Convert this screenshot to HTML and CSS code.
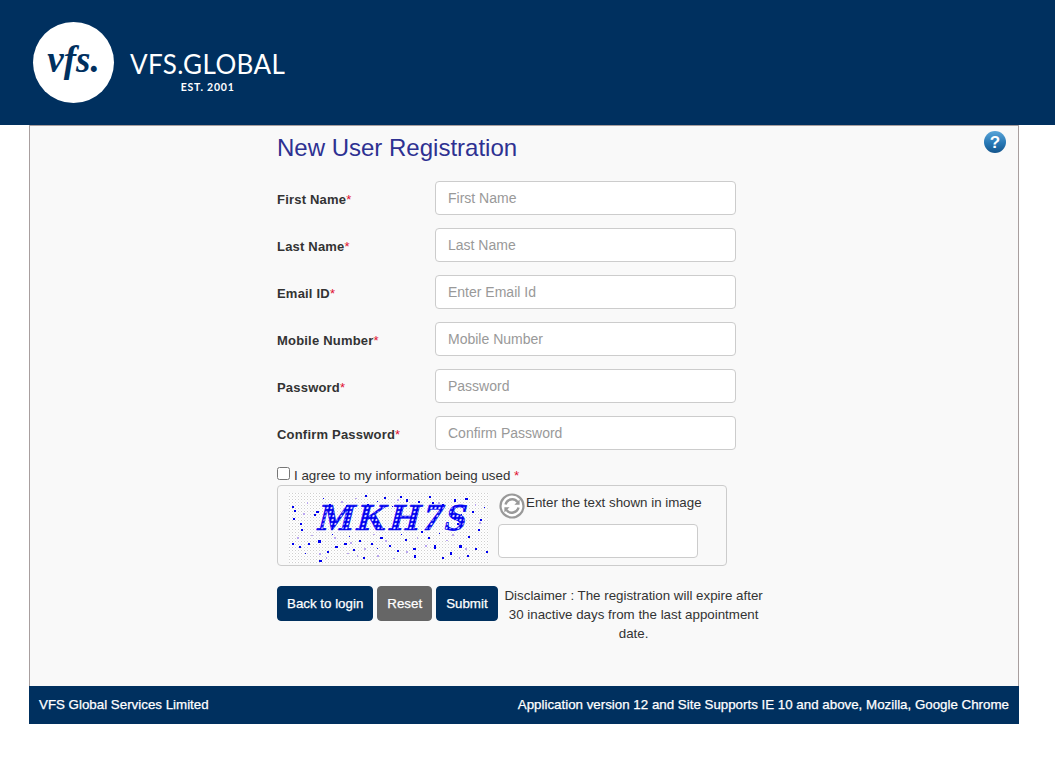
FILE: index.html
```html
<!DOCTYPE html>
<html lang="en">
<head>
    <meta charset="UTF-8" />
    <title>New User Registration</title>
    <link rel="stylesheet" href="styles.css">
</head>
<body>
<!-- header -->
<header class="site-header">
    <div class="logo">
        <div class="logo-circle">vfs.</div>
        <div class="logo-text">
            <div class="logo-name">VFS.GLOBAL</div>
            <div class="logo-est">EST. 2001</div>
        </div>
    </div>
</header>

<div class="wrapper">
    <main class="panel">
        <a class="help-icon" href="#" aria-label="Help">
            <svg width="24" height="24" viewBox="0 0 24 24">
                <defs>
                    <linearGradient id="helpFill" x1="0" y1="0" x2="0" y2="1">
                        <stop offset="0" stop-color="#5aa5d8" />
                        <stop offset="0.55" stop-color="#2778b5" />
                        <stop offset="1" stop-color="#14558c" />
                    </linearGradient>
                </defs>
                <circle cx="12" cy="12" r="11" fill="url(#helpFill)" />
                <text x="12" y="18" text-anchor="middle" class="help-mark">?</text>
            </svg>
        </a>

        <h1 class="page-title">New User Registration</h1>

        <form class="reg-form">
            <div class="form-row">
                <label class="form-label">First Name<span class="req">*</span></label>
                <input class="form-input" type="text" placeholder="First Name" />
            </div>
            <div class="form-row">
                <label class="form-label">Last Name<span class="req">*</span></label>
                <input class="form-input" type="text" placeholder="Last Name" />
            </div>
            <div class="form-row">
                <label class="form-label">Email ID<span class="req">*</span></label>
                <input class="form-input" type="text" placeholder="Enter Email Id" />
            </div>
            <div class="form-row">
                <label class="form-label">Mobile Number<span class="req">*</span></label>
                <input class="form-input" type="text" placeholder="Mobile Number" />
            </div>
            <div class="form-row">
                <label class="form-label">Password<span class="req">*</span></label>
                <input class="form-input" type="password" placeholder="Password" />
            </div>
            <div class="form-row">
                <label class="form-label">Confirm Password<span class="req">*</span></label>
                <input class="form-input" type="password" placeholder="Confirm Password" />
            </div>

            <label class="agree">
                <input class="agree-check" type="checkbox" />
                <span>I agree to my information being used <span class="req">*</span></span>
            </label>

            <!-- captcha -->
            <div class="captcha-box">
                <svg class="captcha-img" width="200" height="70" viewBox="0 0 200 70">
                    <defs>
                        <pattern id="stipple" width="3" height="3" patternUnits="userSpaceOnUse">
                            <rect width="3" height="3" fill="#fff" />
                            <rect width="1" height="1" fill="#cfcfcf" />
                            <rect x="1.5" y="1.5" width="1" height="1" fill="#e4e4e4" />
                        </pattern>
                        <pattern id="letterFill" width="4" height="4" patternUnits="userSpaceOnUse">
                            <rect width="4" height="4" fill="#0000f0" />
                            <rect x="1" y="1" width="2" height="2" fill="#fff" />
                        </pattern>
                    </defs>
                    <rect width="200" height="70" fill="url(#stipple)" />
                    <path fill="#b9a6f0" d="M14 20h2v2h-2zM30 60h2v2h-2zM52 8h2v2h-2zM61 49h2v2h-2zM75 55h2v2h-2zM96 47h2v2h-2zM108 6h2v2h-2zM117 58h2v2h-2zM136 52h2v2h-2zM149 9h2v2h-2zM163 41h2v2h-2zM176 55h2v2h-2zM190 29h2v2h-2zM8 44h2v2h-2zM45 44h2v2h-2zM88 62h2v2h-2zM22 42h2v1h-2zM37 64h1v2h-1zM58 60h2v1h-2zM68 62h1v2h-1zM84 41h2v1h-2zM104 65h2v1h-2zM128 44h1v2h-1zM157 47h2v1h-2zM170 64h1v2h-1zM18 9h1v2h-1zM66 5h2v1h-2zM122 12h2v1h-2zM186 11h1v2h-1z" />
                    <path fill="#0000f0" d="M3 13h2v2h-2zM5 17h2v2h-2zM4 25h2v2h-2zM11 30h2v2h-2zM12 36h2v2h-2zM27 18h3v2h-3zM25 21h2v2h-2zM40 11h2v2h-2zM57 12h2v2h-2zM78 11h2v2h-2zM76 2h2v2h-2zM95 4h2v2h-2zM111 3h2v2h-2zM117 6h2v3h-2zM129 8h2v2h-2zM140 3h2v2h-2zM143 9h2v2h-2zM153 11h2v2h-2zM165 6h2v3h-2zM176 5h3v2h-3zM183 18h2v2h-2zM191 26h2v2h-2zM189 36h2v2h-2zM179 43h2v2h-2zM186 55h2v2h-2zM170 52h3v3h-3zM197 58h2v2h-2zM161 59h2v3h-2zM145 52h2v4h-2zM139 44h2v2h-2zM132 38h2v2h-2zM124 55h3v2h-3zM116 46h2v2h-2zM108 57h2v2h-2zM100 52h2v2h-2zM91 44h3v2h-3zM82 50h2v2h-2zM70 47h2v2h-2zM64 56h2v2h-2zM55 50h3v2h-3zM46 53h3v2h-3zM38 58h2v2h-2zM29 47h3v3h-3zM19 50h2v2h-2zM10 53h2v2h-2zM3 50h2v2h-2zM30 67h3v2h-3zM74 64h2v2h-2zM125 62h2v3h-2zM153 64h2v2h-2zM178 62h2v2h-2zM168 30h2v2h-2zM16 60h1v1h-1zM43 41h1v1h-1zM60 43h1v1h-1zM88 55h1v1h-1zM112 41h1v1h-1zM150 40h1v1h-1zM158 33h1v1h-1zM172 21h1v1h-1zM195 14h1v1h-1zM34 5h1v1h-1zM88 8h1v1h-1zM103 13h1v1h-1z" />
                    <text transform="translate(27 37) skewX(-14)" class="captcha-text" fill="url(#letterFill)" stroke="#0000f0" stroke-width="0.7" textLength="148" lengthAdjust="spacing">MKH7S</text>
                </svg>
                <div class="captcha-side">
                    <div class="captcha-hint">
                        <svg class="refresh-icon" width="26" height="26" viewBox="0 0 26 26">
                            <circle cx="13" cy="13" r="11.5" fill="#fff" stroke="#999" stroke-width="2.2" />
                            <path d="M6.5 11.5a6.8 6.8 0 0 1 12-2.5" fill="none" stroke="#999" stroke-width="2.4" />
                            <path d="M20.6 6.6v5.2h-5.2z" fill="#999" />
                            <path d="M19.5 14.5a6.8 6.8 0 0 1-12 2.5" fill="none" stroke="#999" stroke-width="2.4" />
                            <path d="M5.4 19.4v-5.2h5.2z" fill="#999" />
                        </svg>
                        <span class="hint-text">Enter the text shown in image</span>
                    </div>
                    <input class="captcha-input" type="text" />
                </div>
            </div>

            <div class="actions">
                <button class="btn" type="button">Back to login</button>
                <button class="btn btn-grey" type="reset">Reset</button>
                <button class="btn" type="button">Submit</button>
                <p class="disclaimer">Disclaimer : The registration will expire after 30 inactive days from the last appointment date.</p>
            </div>
        </form>
    </main>

    <footer class="site-footer">
        <span>VFS Global Services Limited</span>
        <span>Application version 12 and Site Supports IE 10 and above, Mozilla, Google Chrome</span>
    </footer>
</div>
</body>
</html>
```

FILE: styles.css
```css
* {
    margin: 0;
    padding: 0;
    box-sizing: border-box;
    font-family: "Liberation Sans", Arial, sans-serif;
}

body {
    background: #fff;
    color: #333;
    font-size: 13.33px;
}

.site-header {
    background: #00305f;
    height: 125px;
    padding: 22px 0 0 33px;
}

.logo {
    display: flex;
    align-items: flex-start;
}

.logo-circle {
    width: 81px;
    height: 81px;
    border-radius: 50%;
    background: #fff;
    color: #00305f;
    font-family: "Liberation Serif", serif;
    font-style: italic;
    font-weight: bold;
    font-size: 37px;
    line-height: 76px;
    text-align: center;
    flex-shrink: 0;
}

.logo-text {
    margin-left: 16px;
    padding-top: 27px;
    text-align: center;
    color: #fff;
}

.logo-name {
    font-family: Lato, sans-serif;
    font-weight: 400;
    font-size: 26px;
    line-height: 30px;
    letter-spacing: 0.4px;
}

.logo-est {
    font-family: Lato, sans-serif;
    font-weight: 700;
    font-size: 10.5px;
    line-height: 12px;
    letter-spacing: 0.8px;
    margin-top: 2px;
}

.wrapper {
    width: 990px;
    margin-left: 29px;
}

.panel {
    position: relative;
    height: 561px;
    background: #f9f9f9;
    border: 1px solid #a89f9f;
    border-bottom: none;
    padding: 5px 0 0 247px;
}

.help-icon {
    position: absolute;
    top: 4px;
    right: 11px;
    display: block;
    width: 24px;
    height: 24px;
}

.help-mark {
    font-size: 17px;
    font-weight: bold;
    fill: #fff;
}

.page-title {
    font-size: 24px;
    font-weight: normal;
    line-height: 34px;
    color: #2e3192;
    margin-bottom: 16px;
}

.form-row {
    display: flex;
    align-items: center;
    margin-bottom: 13px;
}

.form-label {
    width: 158px;
    font-size: 13px;
    font-weight: bold;
    letter-spacing: 0.2px;
    padding-top: 2px;
    flex-shrink: 0;
}

.req {
    color: #e01030;
    font-weight: normal;
}

.form-input {
    width: 301px;
    height: 34px;
    padding: 0 12px;
    background: #fff;
    border: 1px solid #ccc;
    border-radius: 4px;
    font-size: 14px;
    color: #555;
}

.form-input::placeholder {
    color: #999;
}

.agree {
    display: flex;
    align-items: center;
    height: 18px;
    margin-top: 17px;
    line-height: 18px;
}

.agree-check {
    width: 13px;
    height: 13px;
    margin-right: 4px;
    margin-bottom: 5px;
}

.captcha-box {
    display: flex;
    width: 450px;
    height: 81px;
    padding: 7px 0 0 11px;
    border: 1px solid #ccc;
    border-radius: 4px;
}

.captcha-img {
    display: block;
    flex-shrink: 0;
}

.captcha-text {
    font-family: "Liberation Serif", serif;
    font-weight: bold;
    font-size: 38px;
}

.captcha-side {
    margin-left: 9px;
}

.captcha-hint {
    display: flex;
    align-items: flex-start;
    height: 31px;
}

.refresh-icon {
    margin-left: 1px;
    flex-shrink: 0;
}

.hint-text {
    margin-left: 1px;
    padding-top: 1px;
    line-height: 18px;
}

.captcha-input {
    display: block;
    width: 200px;
    height: 34px;
    background: #fff;
    border: 1px solid #ccc;
    border-radius: 4px;
}

.actions {
    display: flex;
    align-items: flex-start;
    gap: 4px;
    margin-top: 20px;
}

.btn {
    height: 35px;
    padding: 0 9px;
    background: #00305f;
    color: #fff;
    border: 1px solid #00305f;
    border-radius: 4px;
    font-size: 13.33px;
    -webkit-text-stroke: 0.25px #fff;
}

.btn-grey {
    background: #666;
    border-color: #666;
}

.disclaimer {
    width: 270px;
    margin-left: -3px;
    text-align: center;
    line-height: 19px;
}

.site-footer {
    display: flex;
    justify-content: space-between;
    align-items: center;
    height: 38px;
    padding: 0 10px 2px;
    background: #00305f;
    color: #fff;
    font-size: 13.33px;
    -webkit-text-stroke: 0.25px #fff;
}
```
